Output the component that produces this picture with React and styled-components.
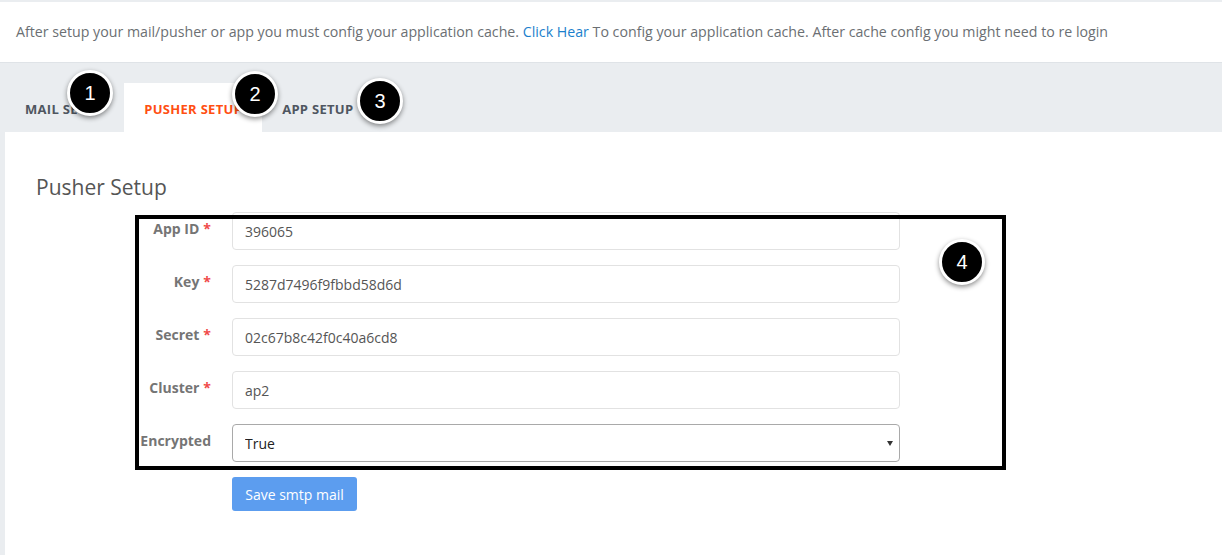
import { styled, createGlobalStyle } from "styled-components";
import { Fragment } from "react";

const GlobalStyle = createGlobalStyle`
  * { box-sizing: border-box; }
  body {
    margin: 0;
    background: #eaedf0;
    font-family: "Open Sans", "Noto Sans", sans-serif;
  }
`;

const Page = styled.div`
  position: relative;
  width: 1222px;
  height: 555px;
  overflow: hidden;
  background: #eaedf0;
`;

const Notice = styled.div`
  margin-top: 2px;
  height: 61px;
  background: #fff;
  border-bottom: 1px solid #dfe3e7;
  padding: 20px 16px 0;
  font-size: 14.2px;
  color: #6b6f73;
  white-space: nowrap;
`;

const Link = styled.a`
  color: #1b7fcc;
  text-decoration: none;
`;

const TabBar = styled.div`
  display: flex;
  align-items: flex-end;
  height: 69px;
  padding-left: 5px;
`;

const Tab = styled.div`
  height: 49px;
  padding: 2px 20px 0;
  display: flex;
  align-items: center;
  font-size: 13px;
  font-weight: 700;
  letter-spacing: 0.3px;
  text-transform: uppercase;
  color: ${(p) => (p.$active ? "#ff4f12" : "#4f5660")};
  background: ${(p) => (p.$active ? "#fff" : "transparent")};
`;

const Panel = styled.div`
  margin-left: 5px;
  height: 423px;
  background: #fff;
  padding: 43px 0 0 31px;
`;

const Heading = styled.h3`
  margin: 0 0 13px 0;
  font-size: 21px;
  line-height: 24px;
  font-weight: 400;
  color: #555;
`;

const Form = styled.div`
  display: grid;
  grid-template-columns: 175px 668px;
  column-gap: 21px;
  row-gap: 15px;
`;

const Label = styled.label`
  text-align: right;
  padding-top: 7px;
  font-size: 14px;
  font-weight: 700;
  color: #757575;
`;

const Star = styled.span`
  color: #f04a4a;
  margin-left: 4px;
`;

const Input = styled.input`
  height: 38px;
  width: 100%;
  border: 1px solid #e2e2e2;
  border-radius: 4px;
  padding: 0 12px;
  font-family: "Open Sans", "Noto Sans", sans-serif;
  font-size: 14px;
  color: #555;
  outline: none;
`;

const SelectWrap = styled.div`
  position: relative;
  &::after {
    content: "";
    position: absolute;
    right: 7px;
    top: 17px;
    border-left: 3.5px solid transparent;
    border-right: 3.5px solid transparent;
    border-top: 5px solid #333;
  }
`;

const Select = styled.select`
  appearance: none;
  height: 38px;
  width: 100%;
  border: 1px solid #a9a9a9;
  border-radius: 4px;
  padding: 0 12px;
  background: #fff;
  font-family: "Open Sans", "Noto Sans", sans-serif;
  font-size: 14px;
  color: #222;
  outline: none;
`;

const Button = styled.button`
  width: 125px;
  height: 34px;
  border: none;
  border-radius: 3px;
  background: #5c9def;
  color: #fff;
  font-family: "Open Sans", "Noto Sans", sans-serif;
  font-size: 14px;
  cursor: pointer;
`;

const Frame = styled.div`
  position: absolute;
  left: 135px;
  top: 215px;
  width: 871px;
  height: 255px;
  border: 4px solid #000;
  pointer-events: none;
`;

const Badge = styled.div`
  position: absolute;
  left: ${(p) => p.$x - 23}px;
  top: ${(p) => p.$y - 23}px;
  width: 46px;
  height: 46px;
  border-radius: 50%;
  background: #000;
  border: 3px solid #fff;
  box-shadow: 0 2px 5px rgba(0, 0, 0, 0.45);
  display: flex;
  align-items: center;
  justify-content: center;
  color: #fff;
  font-family: "Liberation Sans", Arial, sans-serif;
  font-size: 20px;
`;

const fields = [
  { label: "App ID", value: "396065" },
  { label: "Key", value: "5287d7496f9fbbd58d6d" },
  { label: "Secret", value: "02c67b8c42f0c40a6cd8" },
  { label: "Cluster", value: "ap2" },
];

export default function App() {
  return (
    <>
      <GlobalStyle />
      <Page>
        <Notice>
          After setup your mail/pusher or app you must config your application cache.{" "}
          <Link href="#">Click Hear</Link> To config your application cache. After cache
          config you might need to re login
        </Notice>
        <TabBar>
          <Tab>Mail Setup</Tab>
          <Tab $active>Pusher Setup</Tab>
          <Tab>App Setup</Tab>
        </TabBar>
        <Panel>
          <Heading>Pusher Setup</Heading>
          <Form>
            {fields.map((f) => (
              <Fragment key={f.label}>
                <Label>
                  {f.label}
                  <Star>*</Star>
                </Label>
                <Input defaultValue={f.value} />
              </Fragment>
            ))}
            <Label>Encrypted</Label>
            <SelectWrap>
              <Select defaultValue="true">
                <option value="true">True</option>
                <option value="false">False</option>
              </Select>
            </SelectWrap>
            <span />
            <div>
              <Button>Save smtp mail</Button>
            </div>
          </Form>
        </Panel>
        <Frame />
        <Badge $x={90} $y={93}>1</Badge>
        <Badge $x={255} $y={94}>2</Badge>
        <Badge $x={380} $y={101}>3</Badge>
        <Badge $x={962} $y={262}>4</Badge>
      </Page>
    </>
  );
}
